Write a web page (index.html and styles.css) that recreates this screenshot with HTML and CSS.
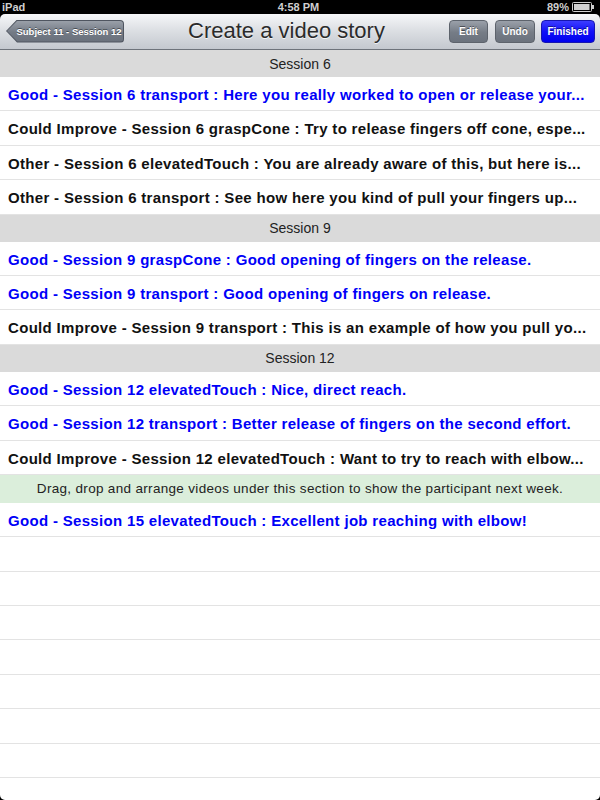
FILE: index.html
```html
<!DOCTYPE html>
<html>
<head>
<meta charset="utf-8">
<link rel="stylesheet" href="styles.css">
</head>
<body>
<div class="screen">
  <div class="status">
    <span class="st-left">iPad</span>
    <span class="st-center">4:58 PM</span>
    <span class="st-right">89%
      <svg class="battery" width="23" height="10" viewBox="0 0 23 10">
        <rect x="0.5" y="0.5" width="19" height="9" rx="1" fill="none" stroke="#cfcfcf"/>
        <rect x="2" y="2" width="15.5" height="6" fill="#cfcfcf"/>
        <rect x="20" y="3" width="2" height="4" fill="#cfcfcf"/>
      </svg>
    </span>
  </div>
  <div class="navbar">
    <div class="back"><div class="back-inner">Subject 11 - Session 12</div></div>
    <div class="title">Create a video story</div>
    <div class="actions">
      <div class="btn btn-edit">Edit</div>
      <div class="btn btn-undo">Undo</div>
      <div class="btn btn-blue">Finished</div>
    </div>
  </div>
  <div class="list">
    <div class="section">Session 6</div>
    <div class="row good">Good - Session 6 transport : Here you really worked to open or release your...</div>
    <div class="row">Could Improve - Session 6 graspCone : Try to release fingers off cone, espe...</div>
    <div class="row">Other - Session 6 elevatedTouch : You are already aware of this, but here is...</div>
    <div class="row">Other - Session 6 transport : See how here you kind of pull your fingers up...</div>
    <div class="section">Session 9</div>
    <div class="row good">Good - Session 9 graspCone : Good opening of fingers on the release.</div>
    <div class="row good">Good - Session 9 transport : Good opening of fingers on release.</div>
    <div class="row">Could Improve - Session 9 transport : This is an example of how you pull yo...</div>
    <div class="section">Session 12</div>
    <div class="row good">Good - Session 12 elevatedTouch : Nice, direct reach.</div>
    <div class="row good">Good - Session 12 transport : Better release of fingers on the second effort.</div>
    <div class="row">Could Improve - Session 12 elevatedTouch : Want to try to reach with elbow...</div>
    <div class="hint">Drag, drop and arrange videos under this section to show the participant next week.</div>
    <div class="row good">Good - Session 15 elevatedTouch : Excellent job reaching with elbow!</div>
    <div class="row"></div>
    <div class="row"></div>
    <div class="row"></div>
    <div class="row"></div>
    <div class="row"></div>
    <div class="row"></div>
    <div class="row"></div>
    <div class="row"></div>
  </div>
</div>
</body>
</html>
```

FILE: styles.css
```css
* { box-sizing: border-box; }
html, body { margin: 0; padding: 0; background: #000; }
body { font-family: "Liberation Sans", Arial, sans-serif; }
.screen {
  width: 600px;
  height: 800px;
  overflow: hidden;
  background: #000;
  display: flex;
  flex-direction: column;
  border-bottom-left-radius: 5px;
  border-bottom-right-radius: 5px;
}
.status {
  height: 14px;
  flex: none;
  background: #000;
  color: #cfcfcf;
  font-size: 11px;
  font-weight: bold;
  display: flex;
  align-items: center;
  justify-content: space-between;
  padding: 0 5px 0 2px;
  line-height: 14px;
}
.st-left, .st-right { width: 120px; }
.st-right { display: flex; justify-content: flex-end; align-items: center; gap: 3px; }
.st-center { flex: 1; text-align: center; }
.navbar {
  height: 36px;
  flex: none;
  background: linear-gradient(#f6f7f9, #dde0e4 45%, #c4c8cf);
  border-bottom: 1px solid #6e737b;
  border-top-left-radius: 5px;
  border-top-right-radius: 5px;
  display: flex;
  align-items: center;
  padding: 0 5px 1px 6px;
}
.back {
  width: 118px;
  height: 23px;
  background: #4f5560;
  clip-path: polygon(11px 0, 100% 0, 100% 100%, 11px 100%, 0 50%);
  border-radius: 0 4px 4px 0;
  padding: 1px;
  flex: none;
}
.back-inner {
  height: 21px;
  width: 100%;
  background: linear-gradient(#9aa0a9, #737a85 55%, #6a717c);
  clip-path: polygon(10.5px 0, 100% 0, 100% 100%, 10.5px 100%, 0 50%);
  border-radius: 0 3px 3px 0;
  color: #fff;
  font-size: 9.5px;
  font-weight: bold;
  text-shadow: 0 -1px 0 rgba(0,0,0,0.45);
  display: flex;
  align-items: center;
  justify-content: center;
  padding-left: 8px;
}
.title {
  flex: 1;
  text-align: center;
  font-size: 22px;
  color: #2b2b2b;
  text-shadow: 0 1px 0 rgba(255,255,255,0.8);
}
.actions { display: flex; gap: 7px; flex: none; }
.btn {
  height: 23px;
  border: 1px solid #5d636c;
  border-radius: 4px;
  background: linear-gradient(#9aa0a9, #757c86 55%, #6b727d);
  color: #fff;
  font-size: 10px;
  font-weight: bold;
  text-shadow: 0 -1px 0 rgba(0,0,0,0.45);
  display: flex;
  align-items: center;
  justify-content: center;
}
.btn-edit { width: 39px; }
.btn-undo { width: 40px; margin-right: -1px; }
.btn-blue {
  background: linear-gradient(#3d3dff, #1010f8 50%, #0000ee);
  border-color: #1616b0;
  width: 54px;
}
.list {
  flex: 1;
  background: #fff;
  display: flex;
  flex-direction: column;
}
.section {
  height: 27px;
  flex: none;
  background: #dadada;
  color: #222;
  font-size: 14px;
  display: flex;
  align-items: center;
  justify-content: center;
}
.row {
  height: 34.4px;
  flex: none;
  border-bottom: 1px solid #e3e3e3;
  color: #111;
  font-size: 15px;
  letter-spacing: 0.32px;
  font-weight: bold;
  line-height: 31.4px;
  padding: 2px 8px 0 8px;
  white-space: nowrap;
  overflow: hidden;
}
.row.good { color: #0000f8; }
.hint {
  height: 28px;
  flex: none;
  background: #dbeedb;
  color: #222;
  font-size: 13.5px;
  letter-spacing: 0.32px;
  display: flex;
  align-items: center;
  justify-content: center;
}
```
